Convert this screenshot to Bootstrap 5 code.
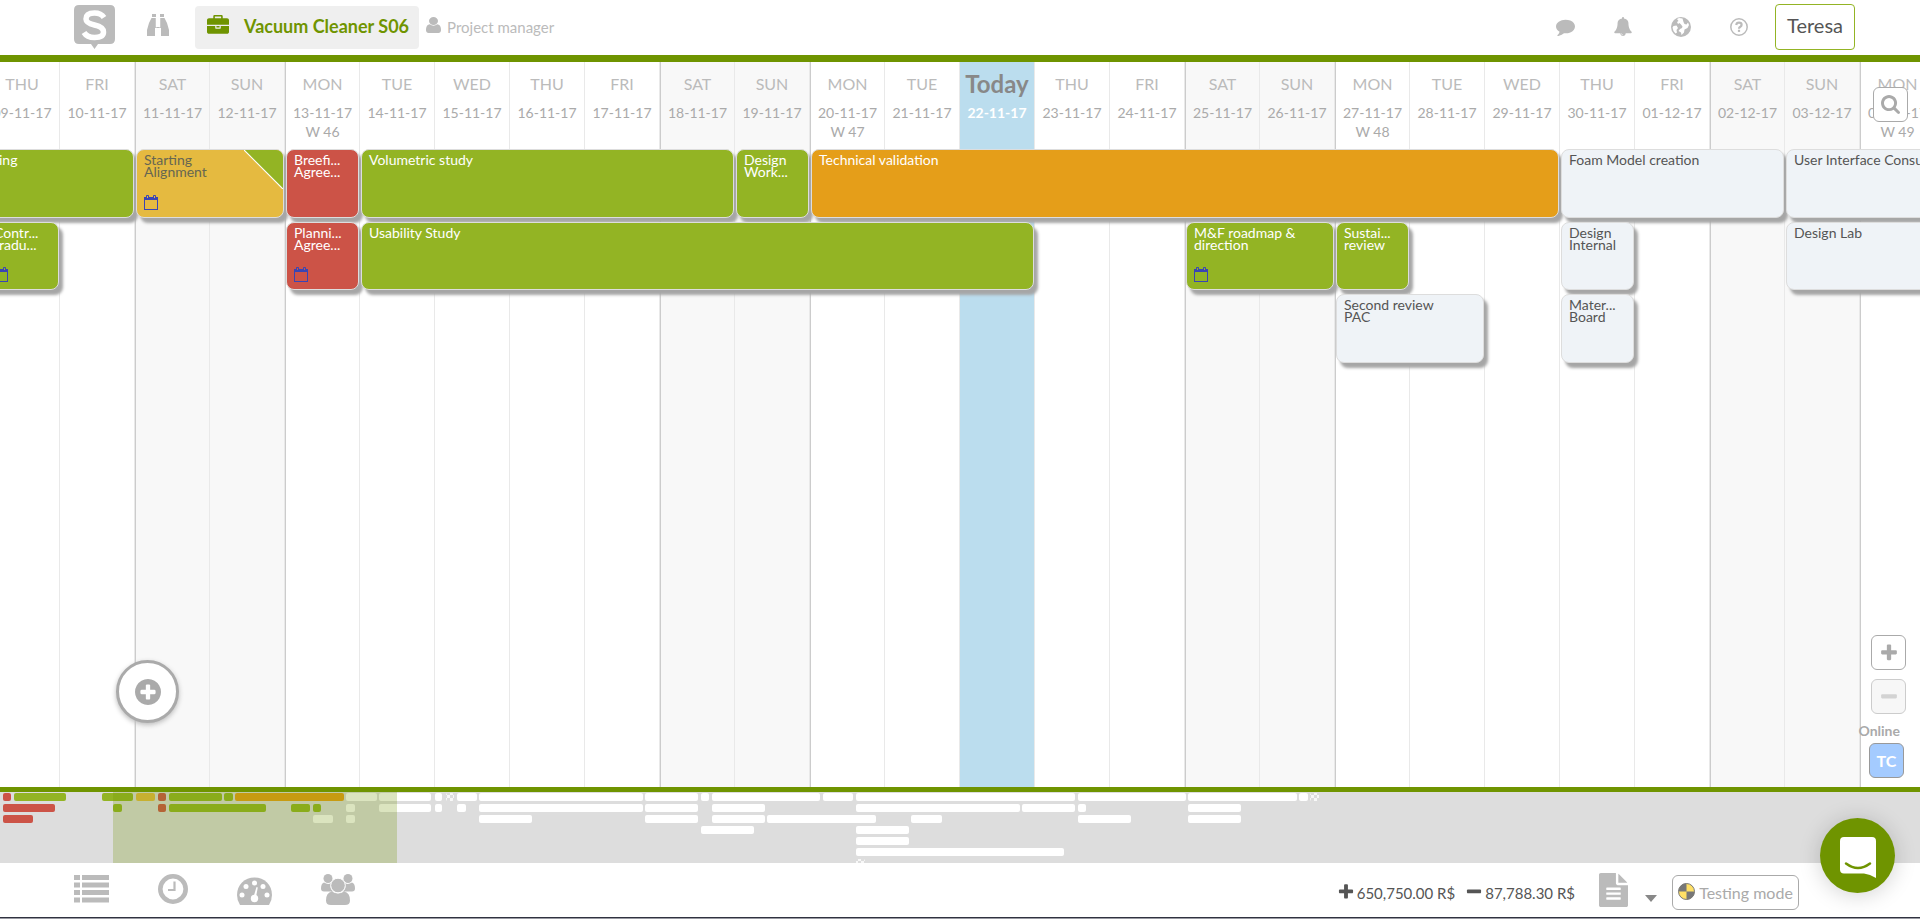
<!DOCTYPE html>
<html lang="en">
<head>
<meta charset="utf-8">
<meta name="viewport" content="width=device-width, initial-scale=1">
<title>Vacuum Cleaner S06</title>
<link href="https://cdn.jsdelivr.net/npm/bootstrap@5.3.0/dist/css/bootstrap.min.css" rel="stylesheet">
<script src="https://cdn.jsdelivr.net/npm/bootstrap@5.3.0/dist/js/bootstrap.bundle.min.js"></script>
<style>
  :root { --leaf: #6f9400; --soft: #bbb; --day: 75px; }
  body { font-family: Lato, "Liberation Sans", sans-serif; color: #555; background: #fff; }
  svg { display: block; fill: currentColor; flex: none; }
  .plain { border: 0; background: none; padding: 0; color: var(--soft); text-decoration: none; }
  .topbar { height: 62px; border-bottom: 7px solid var(--leaf); padding: 0 65px 1px 74px; }
  .project { height: 43px; background: #efefef; color: var(--leaf); font-size: 18px; font-weight: 700; border: 0; border-radius: 4px; padding: 0 10px 2px 12px; gap: 15px; margin-left: 26px; }
  .role { color: var(--soft); font-size: 15px; gap: 6px; margin-left: 7px; }
  .account { height: 46px; width: 80px; font-size: 20px; color: #555; background: #fff; border: 1px solid #93b424; border-radius: 4px; padding: 0 0 4px; }
  .tools { gap: 39px; margin-right: 27px; padding-bottom: 1px; }

  .timeline { min-height: 0; }
  .days, .lane-grid { display: grid; grid-auto-columns: var(--day); grid-template-columns: repeat(26, var(--day)); margin-left: -15px; }
  .days { height: 100%; }
  .day { padding-top: 10px; text-align: center; font-size: 14px; line-height: 19px; color: #aaa; border-right: 1px solid #e9e9e9; white-space: nowrap; }
  .day b { display: block; font-size: 16px; font-weight: 400; line-height: 24px; margin-bottom: 7px; color: var(--soft); }
  .day.off { background: #f8f8f8; }
  .day.edge { border-left: 1px solid #ccc; }
  .day.now { background: #bbddee; background-clip: padding-box; color: #fff; font-weight: 700; }
  .day.now b { font-size: 24px; font-weight: 700; color: #888; }
  .lane-grid { position: absolute; top: 87px; left: 0; grid-template-rows: 69px 68px 69px; row-gap: 4px; }
  .task { position: relative; display: flex; flex-direction: column; align-items: flex-start; text-align: left; margin: 0 1px; padding: 4px 6px 7px 7px; border: 1px solid #ddd; border-radius: 8px; box-shadow: 4px 5px 3px #a6a6a6; font-size: 14px; line-height: 12px; background: #eff3f7; color: #555; white-space: nowrap; }
  .task.done { background: #93b424; color: #fff; }
  .task.late { background: #cc5347; color: #fff; }
  .task.live { background: #e59e19; color: #fff; }
  .task.part { background: #e5ba40; color: #666652; }
  .task.cut { padding-left: 12px; }
  .task .cal { margin-top: auto; color: #3a45b4; }
  .task .fold { position: absolute; top: 0; right: 0; border-top-right-radius: 7px; }
  .square { width: 35px; height: 35px; border: 1px solid #aaa; border-radius: 6px; background: #fff; color: #aaa; padding: 0; display: flex; align-items: center; justify-content: center; }
  .square:disabled { border-color: #ccc; background: #f7f7f7; color: #d3d3d3; }
  .square.me { background: #a4cbff; border-color: #999; color: #fff; font-size: 16px; font-weight: 700; }
  .find { position: absolute; top: 25px; right: 12px; }
  .side { position: absolute; right: 14px; bottom: 9px; }
  .side .zoom-in { margin-bottom: 9px; }
  .side .online { font-size: 14px; font-weight: 700; line-height: 17px; color: #aaa; margin: 8px 6px 4px 0; }
  .side .me { margin-right: 2px; }
  .add { position: absolute; left: 116px; bottom: 64px; width: 63px; height: 63px; border: 3px solid #aaa; border-radius: 50%; background: #fff; color: #aaa; padding: 0; box-shadow: 0 2px 5px #bbb; }

  .minimap { height: 76px; border-top: 5px solid var(--leaf); background: #ddd; }
  .bottombar { height: 54px; padding-left: 74px; padding-right: 121px; }
  .views { gap: 49px; padding-bottom: 2px; }
  .sums { font-size: 15px; color: #555; gap: 2px; padding-top: 7px; }
  .testing { height: 35px; width: 127px; font-size: 16px; color: #aaa; background: #fff; border: 1px solid #aaa; border-radius: 6px; padding: 2px 0 0; margin-top: 4px; gap: 4px; white-space: nowrap; }
  .more { margin: 16px 15px 0 17px; }
  .strip { height: 2px; background: #999aa3; border-top: 1px solid #30323f; }
  .chat { position: fixed; right: 25px; bottom: 26px; width: 75px; height: 75px; border: 0; border-radius: 50%; background: var(--leaf); color: #fff; padding: 0; box-shadow: 0 2px 22px rgba(0,0,0,.18); }
</style>
</head>
<body class="d-flex flex-column vh-100 overflow-hidden">

<svg width="0" height="0" class="position-absolute" aria-hidden="true">
  <symbol id="i-plus" viewBox="0 0 1792 1792"><path d="M1600 736v192q0 40-28 68t-68 28h-416v416q0 40-28 68t-68 28h-192q-40 0-68-28t-28-68v-416h-416q-40 0-68-28t-28-68v-192q0-40 28-68t68-28h416v-416q0-40 28-68t68-28h192q40 0 68 28t28 68v416h416q40 0 68 28t28 68z"/></symbol>
  <symbol id="i-minus" viewBox="0 0 1792 1792"><path d="M1600 736v192q0 40-28 68t-68 28h-1216q-40 0-68-28t-28-68v-192q0-40 28-68t68-28h1216q40 0 68 28t28 68z"/></symbol>
  <symbol id="i-cal" viewBox="0 0 14 15"><path d="M0 2h2V1q0-1 1-1h1q1 0 1 1v1h4V1q0-1 1-1h1q1 0 1 1v1h2v13H0zM1 5v9h12V5zM3 1v2h1V1zM10 1v2h1V1z" fill-rule="evenodd"/></symbol>
</svg>

<header class="topbar d-flex align-items-center flex-shrink-0">
  <a href="#" class="plain" aria-label="Home">
    <svg width="41" height="44" viewBox="0 0 41 44"><path d="M5 0h31q5 0 5 5v29q0 5-5 5H24l-3.500 5L17 39H5q-5 0-5-5V5q0-5 5-5z"/><path d="M30 12.500Q27 8 20.500 8 12 8 12 14q0 4 8.500 6 9 2 9 7 0 5.500-9 5.500-7.500 0-10.500-5" fill="none" stroke="#fff" stroke-width="5.500"/></svg>
  </a>
  <button type="button" class="plain" style="margin-left:32px" aria-label="Search projects">
    <svg width="22" height="22" viewBox="0 0 22 22" class="mb-1"><path d="M5 0h4v3H5zM13 0h4v3h-4zM4.500 4H9v9h4V4h4.500l2.500 5 2 7v6h-8v-8H8v8H0v-6l2-7z"/><path d="M9.200 3v10.500M12.800 3v10.500" stroke="#fff" stroke-width=".8"/></svg>
  </button>
  <button type="button" class="project d-flex align-items-center">
    <svg width="22" height="22" viewBox="0 0 1792 1792"><path d="M640 256h512v-128h-512v128zm1152 640v480q0 66-47 113t-113 47h-1472q-66 0-113-47t-47-113v-480h672v160q0 26 19 45t45 19h320q26 0 45-19t19-45v-160h672zm-768 0v128h-256v-128h256zm768-480v384h-1792v-384q0-66 47-113t113-47h352v-160q0-40 28-68t68-28h576q40 0 68 28t28 68v160h352q66 0 113 47t47 113z"/></svg>
    <span>Vacuum Cleaner S06</span>
  </button>
  <span class="role d-flex align-items-center">
    <svg width="15" height="16" viewBox="256 128 1280 1536" preserveAspectRatio="none" class="mb-1"><path d="M1536 1399q0 109-62.500 187t-150.500 78h-854q-88 0-150.500-78t-62.500-187q0-85 8.500-160.500t31.500-152 58.500-131 94-89 134.500-34.500q131 128 313 128t313-128q76 0 134.500 34.500t94 89 58.500 131 31.500 152 8.500 160.500zm-256-887q0 159-112.500 271.500t-271.500 112.500-271.500-112.500-112.500-271.500 112.500-271.500 271.500-112.500 271.500 112.500 112.500 271.500z"/></svg>
    Project manager
  </span>
  <nav class="tools d-flex align-items-center ms-auto">
    <a href="#" class="plain" aria-label="Comments"><svg width="19" height="19" viewBox="0 0 1792 1792"><path d="M1792 896q0 174-120 321.500t-326 233-450 85.500q-70 0-145-8-198 175-460 242-49 14-114 22-17 2-30.500-9t-17.500-29v-1q-3-4-.5-12t2-10 4.500-9.500l6-9 7-8.500 8-9q7-8 31-34.500t34.500-38 31-39.500 32.500-51 27-59 26-76q-157-89-247.500-220t-90.500-281q0-130 71-248.500t191-204.500 286-136.500 348-50.500q244 0 450 85.500t326 233 120 321.500z"/></svg></a>
    <a href="#" class="plain" aria-label="Notifications"><svg width="18" height="19" viewBox="64 0 1664 1792"><path d="M912 1696q0-16-16-16-59 0-101.500-42.500t-42.500-101.500q0-16-16-16t-16 16q0 73 51.500 124.500t124.500 51.500q16 0 16-16zm816-288q0 52-38 90t-90 38h-448q0 106-75 181t-181 75-181-75-75-181h-448q-52 0-90-38t-38-90q50-42 91-88t85-119.500 74.500-158.500 50-206 19.500-260q0-152 117-282.500t307-158.500q-8-19-8-39 0-40 28-68t68-28 68 28 28 68q0 20-8 39 190 28 307 158.500t117 282.500q0 139 19.500 260t50 206 74.500 158.500 85 119.500 91 88z"/></svg></a>
    <a href="#" class="plain" aria-label="Language"><svg width="20" height="20" viewBox="0 0 20 20"><circle cx="10" cy="10" r="10"/><path fill="#fff" d="M8.500 1.500 12 1l2 1-1.500 2 1.500 1-1 2-1.500-1L10 7.500 8.500 9.500 9 11l2 1 1.500 2-2.500 1.500L9.500 18 7 15.500l-.5-3-3-1.500L2 8l1-2.500 1.500 2L6.500 7l1-2zM14.500 8.500l3 .5 1 1.500-1 3.500-2 2.500-1.500-1 .5-2.500-1.500-2z" transform="matrix(-1 0 0 1 20 0)"/></svg></a>
    <a href="#" class="plain" aria-label="Help"><svg width="18" height="18" viewBox="0 0 18 18"><g fill="none" stroke="currentColor"><circle cx="9" cy="9" r="8.200" stroke-width="1.500"/><path d="M6.200 7q.3-2.400 2.800-2.400 2.600 0 2.600 2.100 0 1.200-1.300 2-1.300.7-1.300 2" stroke-width="2.200"/></g><path d="M7.900 11.800h2.200v2.100H7.900z"/></svg></a>
  </nav>
  <button type="button" class="account">Teresa</button>
</header>

<main class="timeline position-relative flex-grow-1 overflow-hidden">
  <div class="days" id="days"></div>
  <div class="lane-grid" id="lanes"></div>
  <button type="button" class="square find" aria-label="Search">
    <svg width="19" height="19" viewBox="64 128 1664 1664"><path d="M1216 832q0-185-131.500-316.500t-316.500-131.500-316.500 131.500-131.500 316.500 131.500 316.500 316.500 131.500 316.500-131.500 131.500-316.500zm512 832q0 52-38 90t-90 38q-54 0-90-38l-343-342q-179 124-399 124-143 0-273.500-55.500t-225-150-150-225-55.500-273.500 55.500-273.500 150-225 225-150 273.500-55.500 273.500 55.500 225 150 150 225 55.500 273.500q0 220-124 399l343 343q37 37 37 90z"/></svg>
  </button>
  <button type="button" class="add d-flex align-items-center justify-content-center" aria-label="Add task">
    <svg width="26" height="26" viewBox="128 128 1536 1536"><path d="M1344 960v-128q0-26-19-45t-45-19h-256v-256q0-26-19-45t-45-19h-128q-26 0-45 19t-19 45v256h-256q-26 0-45 19t-19 45v128q0 26 19 45t45 19h256v256q0 26 19 45t45 19h128q26 0 45-19t19-45v-256h256q26 0 45-19t19-45zm320-64q0 209-103 385.500t-279.500 279.500-385.500 103-385.500-103-279.500-279.500-103-385.500 103-385.500 279.500-279.500 385.500-103 385.500 103 279.500 279.500 103 385.500z"/></svg>
  </button>
  <div class="side d-flex flex-column align-items-end">
    <button type="button" class="square zoom-in" aria-label="Zoom in"><svg width="20" height="20"><use href="#i-plus"/></svg></button>
    <button type="button" class="square" disabled aria-label="Zoom out"><svg width="20" height="20"><use href="#i-minus"/></svg></button>
    <span class="online">Online</span>
    <button type="button" class="square me">TC</button>
  </div>
</main>

<section class="minimap flex-shrink-0" aria-label="Project overview">
  <svg id="map" width="100%" height="71">
    <defs><pattern id="check" width="6" height="6" patternUnits="userSpaceOnUse"><path fill="#fff" fill-opacity=".8" d="M0 0h3v3H0zM3 3h3v3H3z"/></pattern></defs>
  </svg>
</section>

<footer class="bottombar d-flex align-items-center flex-shrink-0">
  <nav class="views d-flex align-items-center">
    <button type="button" class="plain" aria-label="List"><svg width="35" height="28" viewBox="0 0 35 28"><path d="M0 0h6v5H0zM8 0h27v5H8zM0 7.500h6v5H0zM8 7.500h27v5H8zM0 15h6v5H0zM8 15h27v5H8zM0 22.500h6v5H0zM8 22.500h27v5H8z"/></svg></button>
    <button type="button" class="plain" aria-label="Time"><svg width="30" height="30" viewBox="0 0 30 30"><g fill="none" stroke="currentColor"><circle cx="15" cy="15" r="12.700" stroke-width="4.600"/><path d="M16.500 7.500v8.500h-6.500" stroke-width="2.200"/></g></svg></button>
    <button type="button" class="plain pt-1" aria-label="Dashboard"><svg width="35" height="28" viewBox="0 0 35 28"><path d="M3 28Q0 23.500 0 18 0 10.500 5 5.500T17.500.5 30 5.500 35 18q0 5.500-3 10z"/><g fill="#fff"><circle cx="5" cy="18" r="2.500"/><circle cx="9" cy="9.500" r="2.500"/><circle cx="17.500" cy="6" r="2.500"/><circle cx="26" cy="9.500" r="2.500"/><circle cx="30" cy="18" r="2.500"/><circle cx="17.500" cy="21.500" r="3.700"/><path d="m16.500 20 3-10 1.300.4-2 10.600z"/></g></svg></button>
    <button type="button" class="plain" aria-label="Team"><svg width="34" height="31" viewBox="0 0 34 31"><circle cx="7" cy="4.500" r="4.500"/><circle cx="27" cy="4.500" r="4.500"/><path d="M3 8.500q4 2.500 7 .5-1.500 5 2 8.500H3q-3 0-3-3 0-5 3-6zM31 8.500q-4 2.500-7 .5 1.500 5-2 8.500h9q3 0 3-3 0-5-3-6zM11 17.500q6 4 12 0 6 1 6 9 0 4.500-5 4.500H10q-5 0-5-4.500 0-8 6-9z"/><circle cx="17" cy="11.500" r="7.300" stroke="#fff"/></svg></button>
  </nav>

  <div class="sums d-flex align-items-center ms-auto">
    <svg width="18" height="18" class="mb-1"><use href="#i-plus"/></svg><span class="me-2">650,750.00 R$</span>
    <svg width="18" height="18" class="mb-1"><use href="#i-minus"/></svg><span>87,788.30 R$</span>
  </div>
  <button type="button" class="plain ms-4" aria-label="Documents"><svg width="29" height="34" viewBox="128 0 1536 1792" preserveAspectRatio="none"><path d="M1596 476q14 14 28 36h-472v-472q22 14 36 28zm-476 164h544v1056q0 40-28 68t-68 28h-1344q-40 0-68-28t-28-68v-1600q0-40 28-68t68-28h800v544q0 40 28 68t68 28zm160 736v-64q0-14-9-23t-23-9h-704q-14 0-23 9t-9 23v64q0 14 9 23t23 9h704q14 0 23-9t9-23zm0-256v-64q0-14-9-23t-23-9h-704q-14 0-23 9t-9 23v64q0 14 9 23t23 9h704q14 0 23-9t9-23zm0-256v-64q0-14-9-23t-23-9h-704q-14 0-23 9t-9 23v64q0 14 9 23t23 9h704q14 0 23-9t9-23z"/></svg></button>
  <button type="button" class="plain more" aria-label="More documents"><svg width="12" height="7" viewBox="0 0 12 7"><path fill="#888" d="M0 0h12L6 7z"/></svg></button>
  <button type="button" class="testing d-flex align-items-center justify-content-center">
    <svg width="17" height="17" viewBox="0 0 17 17" class="mb-1"><circle cx="8.500" cy="8.500" r="8" fill="#ffe066" stroke="#777"/><path fill="#777" d="M8.500 8.500V.5a8 8 0 0 0-8 8zM8.500 8.500v8a8 8 0 0 0 8-8z"/></svg>
    Testing mode
  </button>
</footer>
<div class="strip flex-shrink-0"></div>

<button type="button" class="chat d-flex align-items-center justify-content-center" aria-label="Open chat">
  <svg width="36" height="41" viewBox="0 0 36 41" class="mt-1"><path d="M4 0h28q4 0 4 4v37q-6-4-12-4.500H4q-4 0-4-4V4q0-4 4-4z"/><path d="M6 26.500q12 9 24 0" fill="none" stroke="#6f9400" stroke-width="2.500" stroke-linecap="round"/></svg>
</button>

<script>
  // Day columns, starting on Thursday 9 November 2017
  const names = ['SUN', 'MON', 'TUE', 'WED', 'THU', 'FRI', 'SAT'];
  const two = n => String(n).padStart(2, '0');
  let week = 46, html = '';
  for (let i = 0; i < 26; i++) {
    const d = new Date(2017, 10, 9 + i), w = d.getDay(), now = i === 13;
    const cls = ['day', w % 6 ? '' : 'off', w === 6 || w === 1 ? 'edge' : '', now ? 'now' : ''].join(' ');
    html += `<div class="${cls}"><b>${now ? 'Today' : names[w]}</b>${two(d.getDate())}-${two(d.getMonth() + 1)}-17${w === 1 ? '<br>W ' + week++ : ''}</div>`;
  }
  document.getElementById('days').innerHTML = html;

  // Tasks: row, first day column, days, state, text lines, has a meeting
  const tasks = [
    [1, 1, 2, 'done cut', 'ing'], [1, 3, 2, 'part', 'Starting|Alignment', 1], [1, 5, 1, 'late', 'Breefi...|Agree...'],
    [1, 6, 5, 'done', 'Volumetric study'], [1, 11, 1, 'done', 'Design|Work...'], [1, 12, 10, 'live', 'Technical validation'],
    [1, 22, 3, '', 'Foam Model creation'], [1, 25, 3, '', 'User Interface Consultancy'],
    [2, 1, 1, 'done', 'Contr...|tradu...', 1], [2, 5, 1, 'late', 'Planni...|Agree...', 1], [2, 6, 9, 'done', 'Usability Study'],
    [2, 17, 2, 'done', 'M&amp;F roadmap &amp;|direction', 1], [2, 19, 1, 'done', 'Sustai...|review'],
    [2, 22, 1, '', 'Design|Internal'], [2, 25, 3, '', 'Design Lab'],
    [3, 19, 2, '', 'Second review|PAC'], [3, 22, 1, '', 'Mater...|Board']
  ];
  document.getElementById('lanes').innerHTML = tasks.map(([row, col, span, state, text, cal]) =>
    `<div class="task ${state}" style="grid-area:${row}/${col}/auto/span ${span}"><span>${text.replace('|', '<br>')}</span>` +
    (state === 'part' ? '<svg class="fold" width="39" height="39" viewBox="0 0 39 39"><path d="M0 0h39v39z" fill="#93b424"/><path d="M0 0l39 39" stroke="#fff" stroke-width="1.200"/></svg>' : '') +
    (cal ? '<svg class="cal" width="14" height="15"><use href="#i-cal"/></svg>' : '') + '</div>').join('');

  // Overview bars: start and end for each row, with the state's colour
  const g = '#93b424', r = '#cc5347', y = '#e5ba40', o = '#e59e19', c = 'url(#check)';
  const rows = [
    [[3,11,r],[14,66,g],[102,133,g],[136,155,y],[158,166,r],[169,222,g],[224,233,g],[235,344,o],[346,377],[379,431],[435,442],[446,454,c],[457,477],[479,643],[645,698],[701,709],[712,820],[823,853],[856,1075],[1078,1186],[1188,1297],[1299,1308],[1310,1319,c]],
    [[3,55,r],[113,122,g],[158,166,r],[169,266,g],[291,310,g],[313,321,g],[346,355],[379,431],[435,442],[457,466],[479,643],[645,698],[712,765],[856,1020],[1022,1075],[1078,1086],[1188,1241]],
    [[3,33,r],[313,333],[346,355],[479,532],[645,698],[712,765],[767,876],[911,942],[1078,1131],[1188,1241]],
    [[701,754],[856,909]], [[856,909]], [[856,1064]], [[856,865,c]]
  ];
  document.getElementById('map').insertAdjacentHTML('beforeend', rows.map((bars, i) => bars.map(([a, b, f]) =>
    `<rect x="${a}" y="${1 + 11 * i}" width="${b - a}" height="8" rx="2" fill="${f || '#fff'}"/>`).join('')).join('') +
    '<rect x="113" y="0" width="284" height="71" fill="#6f9400" fill-opacity=".25"/>');
</script>
</body>
</html>
